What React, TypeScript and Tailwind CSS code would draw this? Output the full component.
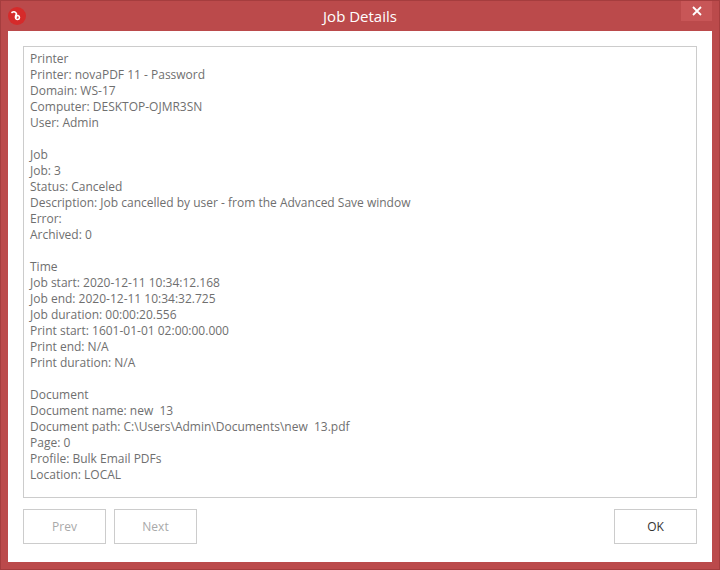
export default function App() {
  const lines = [
    "Printer","Printer: novaPDF 11 - Password","Domain: WS-17","Computer: DESKTOP-OJMR3SN","User: Admin","",
    "Job","Job: 3","Status: Canceled","Description: Job cancelled by user - from the Advanced Save window","Error:","Archived: 0","",
    "Time","Job start: 2020-12-11 10:34:12.168","Job end: 2020-12-11 10:34:32.725","Job duration: 00:00:20.556","Print start: 1601-01-01 02:00:00.000","Print end: N/A","Print duration: N/A","",
    "Document","Document name: new  13","Document path: C:\\Users\\Admin\\Documents\\new  13.pdf","Page: 0","Profile: Bulk Email PDFs","Location: LOCAL",
  ];
  return (
    <div className="w-[720px] h-[570px] bg-[#bb4a4b] flex flex-col border border-[#a53d3e]" style={{ fontFamily: '"Open Sans", "Noto Sans", sans-serif' }}>
      <div className="h-[30px] flex items-center relative shrink-0">
        <div className="ml-[7px] w-[18px] h-[18px] rounded-full bg-[#d62a2a] flex items-center justify-center">
          <svg width="12" height="12" viewBox="0 0 12 12" fill="none" stroke="white" strokeWidth="1.6" strokeLinecap="round">
            <path d="M1 2.5 C3 1 5 2 5.5 4 M5.5 4 C4 6 4 9.5 6.5 9.5 C9 9.5 9 6 7 5.5 C5.5 5.2 5 6.5 5.5 7" />
          </svg>
        </div>
        <div className="flex-1 text-center text-white text-[15px] -ml-[25px]">Job Details</div>
        <div className="absolute right-[7px] top-0 w-[31px] h-[20px] bg-[#c85657] flex items-center justify-center text-white">
          <svg width="10" height="10" viewBox="0 0 10 10" stroke="white" strokeWidth="1.8"><path d="M1 1L9 9M9 1L1 9" /></svg>
        </div>
      </div>
      <div className="mx-[7px] mb-[7px] flex-1 bg-white px-[15px] pt-[15px] flex flex-col">
        <div className="h-[452px] border border-[#cccccc] px-[6px] pt-[4px] text-[12px] leading-[16px] text-[#6f6f6f]">
          {lines.map((l, i) => <div key={i} className="h-[16px] whitespace-pre">{l}</div>)}
        </div>
        <div className="flex mt-[11px] gap-[8px] text-[12px]">
          <div className="w-[83px] h-[35px] border border-[#cccccc] flex items-center justify-center text-[#a9a9a9]">Prev</div>
          <div className="w-[83px] h-[35px] border border-[#cccccc] flex items-center justify-center text-[#a9a9a9]">Next</div>
          <div className="ml-auto w-[83px] h-[35px] border border-[#cccccc] flex items-center justify-center text-[#333]">OK</div>
        </div>
      </div>
    </div>
  );
}
